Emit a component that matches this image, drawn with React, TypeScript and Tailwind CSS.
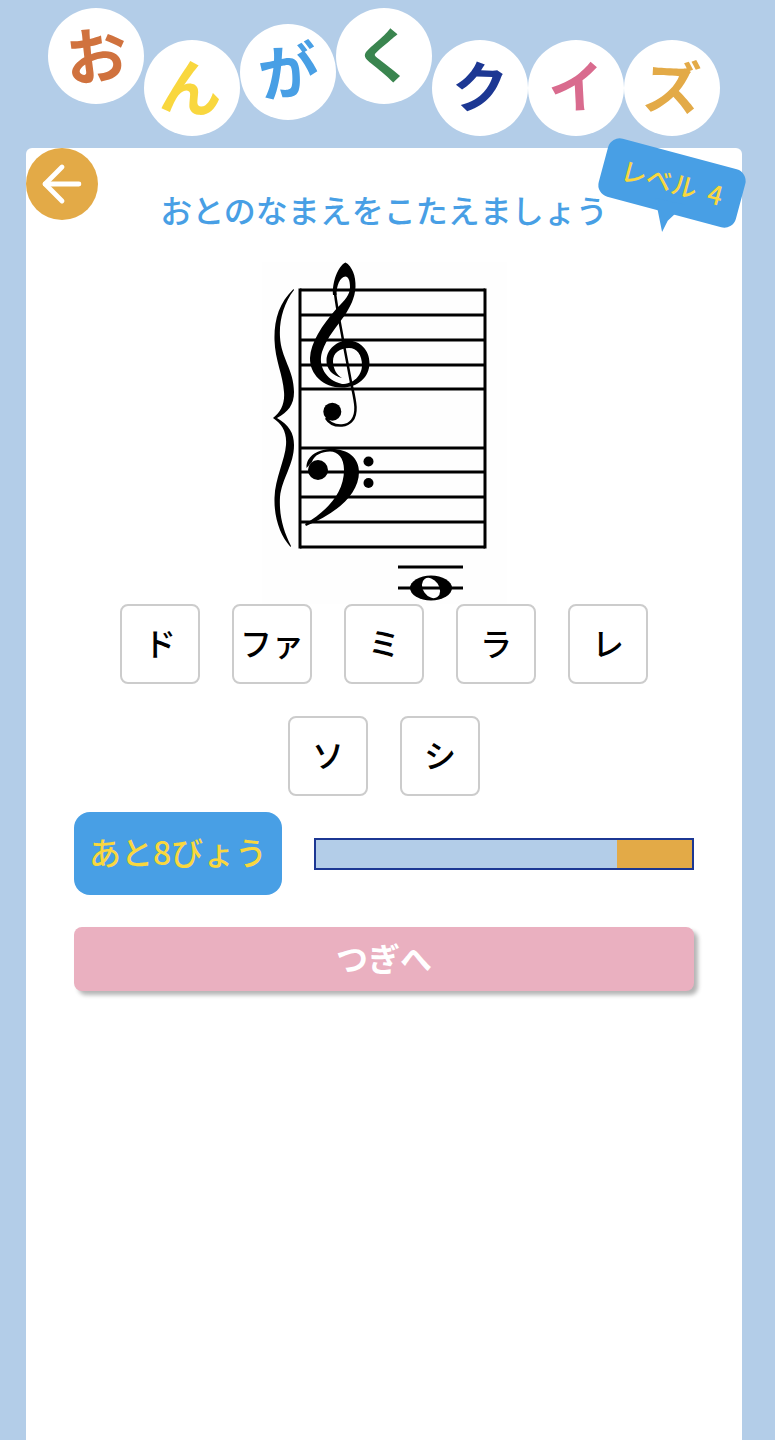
import { ArrowLeft } from "lucide-react";

const font = { fontFamily: '"Noto Sans CJK JP", "Noto Sans", sans-serif' };

const titleChars = [
  { c: "お", top: "mt-2", color: "text-[#d0723e]", tilt: "-rotate-[6deg] text-[62px]" },
  { c: "ん", top: "mt-10", color: "text-[#f9d73e]", tilt: "rotate-[6deg] text-[62px]" },
  { c: "が", top: "mt-6", color: "text-[#489fe5]", tilt: "-rotate-[8deg] text-[60px]" },
  { c: "く", top: "mt-2", color: "text-[#3a854f]", tilt: "-rotate-[2deg] text-[60px]" },
  { c: "ク", top: "mt-10", color: "text-[#1c3793]", tilt: "rotate-[2deg] text-[56px]" },
  { c: "イ", top: "mt-10", color: "text-[#d96b8e]", tilt: "-rotate-[3deg] text-[56px]" },
  { c: "ズ", top: "mt-10", color: "text-[#e3aa47]", tilt: "rotate-[3deg] text-[58px]" },
];

const answers = ["ド", "ファ", "ミ", "ラ", "レ", "ソ", "シ"];

function Score() {
  const top = [290, 315, 340, 365, 389];
  const bottom = [448, 472, 497, 522, 547];
  return (
    <svg viewBox="262 262 245 342" className="block w-[245px] h-[342px] bg-[#fefefe]">
      {[...top, ...bottom].map((y) => (
        <line key={y} x1="300" x2="485" y1={y} y2={y} stroke="#000" strokeWidth="3" />
      ))}
      <line x1="300" x2="300" y1="288.5" y2="548.5" stroke="#000" strokeWidth="3" />
      <line x1="485" x2="485" y1="288.5" y2="548.5" stroke="#000" strokeWidth="3" />
      {/* brace */}
      <path d="M293.5 289C279 303 274 320 274.5 340C275 360 283 375 284 392C285 403 281 412 273 418C282 424 287 432 286 445C285 460 275 478 274.5 498C274 518 280 535 290.5 547L291 546C283 530 279 515 280 497C282 478 294 465 294 445C294 433 289 425 277 418C288 412 294 405 294 392C294 370 281 358 280 337C279 320 284 303 294 290Z" fill="#000" />
      {/* treble clef */}
      <path d="M345.5 262.5C352 266 356 276 355.5 287C355 298 350 307 345 315C338 325 327 337 322 352C318 365 325 380 342 384C353 384 362 376 362 365C362 355 357 348 349 348C340 348 333 353 333 361C333 369 337 375 342 378C333 376 326 369 326.5 360C327 349 337 340.5 348 340.5C360 340.5 369.5 350 369.5 363C369.5 377 358 387.5 342 387.5C323 387.5 309.5 374 310 358C310.5 343 322 325 337 308C345 300 350 295 350 287C350 280 348 276.5 345.5 276.5C340 277 336.5 285 336.5 295L333 295C332 282 338 266 345.5 262.5Z" fill="#000" />
      <path d="M335 293C337 310 341 328 343 340L350 377C352 388 355 398 355.5 407C356 419 350 425 342 425.5C335 426 329 423 326 418" fill="none" stroke="#000" strokeWidth="2.5" />
      <circle cx="332.3" cy="411.7" r="9" fill="#000" />
      {/* bass clef */}
      <path d="M306.5 468C306 456 318 449 332 449C348 449 359 458 359 472C359 495 335 514 306 526L305 524C327 511 344 493 344 470C344 458 338 451.5 330 451.5C322 451.5 314 455 312 462Z" fill="#000" />
      <circle cx="318" cy="470" r="10" fill="#000" />
      <circle cx="368.5" cy="461.5" r="5" fill="#000" />
      <circle cx="368.5" cy="483" r="5" fill="#000" />
      {/* whole note */}
      <line x1="398" x2="463" y1="567" y2="567" stroke="#000" strokeWidth="3" />
      <ellipse cx="431" cy="588" rx="21" ry="12.5" fill="#000" />
      <ellipse cx="431" cy="588" rx="8" ry="11" fill="#fefefe" transform="rotate(-35 431 588)" />
      <line x1="398" x2="463" y1="588" y2="588" stroke="#000" strokeWidth="3" />
    </svg>
  );
}

export default function App() {
  return (
    <div className="min-h-screen h-[1440px] overflow-hidden bg-[#b3cde8]" style={font}>
      <div className="w-[768px] h-full flex flex-col">
        {/* Titulo */}
        <div className="flex justify-center h-[148px] shrink-0">
          {titleChars.map((t) => (
            <div
              key={t.c}
              className={`w-24 h-24 rounded-full bg-white flex items-center justify-center font-bold leading-none pb-2 ${t.top} ${t.color}`}
            >
              <span className={`block ${t.tilt}`}>{t.c}</span>
            </div>
          ))}
        </div>

        {/* Tarjeta */}
        <div className="relative mx-[26px] flex-1 bg-white rounded-t-md">
          <button className="absolute left-0 top-0 w-[72px] h-[72px] rounded-full bg-[#e3aa47] flex items-center justify-center text-white">
            <ArrowLeft size={58} strokeWidth={2} />
          </button>

          <div className="absolute left-[572px] top-[-10px] w-[150px] h-[94px]">
            <div className="absolute left-[3px] top-[15px] w-[142px] h-[60px] rotate-[15deg] rounded-xl bg-[#489fe5] flex items-center justify-center text-[#f9d73e] text-[26px] font-medium whitespace-pre pb-1">
              レベル  4
            </div>
            <svg viewBox="0 0 30 30" className="absolute left-[55px] top-[60px] w-[34px] h-[34px]">
              <path d="M2 0L28 6L13 20L8 30Z" fill="#489fe5" />
            </svg>
          </div>

          <p className="pt-[38px] pb-[2px] text-center text-[32px] leading-[46px] font-medium text-[#489fe5]">
            おとのなまえをこたえましょう
          </p>

          <div className="flex justify-center mt-[28px]">
            <Score />
          </div>

          <div className="mx-12 flex flex-wrap justify-center gap-8">
            {answers.map((a) => (
              <button
                key={a}
                className="w-20 h-20 rounded-lg border-2 border-[#cccccc] bg-white text-black text-[32px] font-medium pb-1 flex items-center justify-center"
              >
                {a}
              </button>
            ))}
          </div>

          <div className="mx-12 mt-4 flex items-center gap-8">
            <div className="w-[208px] h-[83px] rounded-2xl bg-[#489fe5] text-[#f9d73e] text-[32px] font-medium pb-[6px] flex items-center justify-center whitespace-nowrap">
              あと8びょう
            </div>
            <div className="flex-1 h-8 border-2 border-[#1c3793] bg-[#b3cde8] flex justify-end">
              <div className="w-[75px] bg-[#e3aa47]" />
            </div>
          </div>

          <button className="mx-12 mt-8 block w-[620px] h-16 rounded-lg bg-[#eab0c0] text-white text-[32px] font-bold pb-1 shadow-[4px_4px_4px_#b5b5b5]">
            つぎへ
          </button>
        </div>
      </div>
    </div>
  );
}
